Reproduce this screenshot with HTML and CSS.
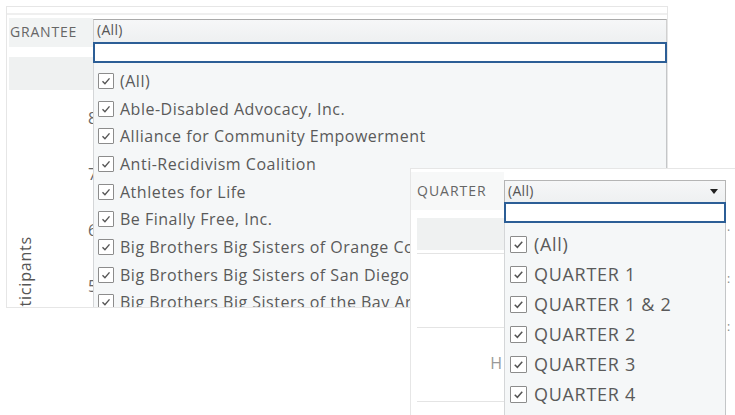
FILE: index.html
```html
<!DOCTYPE html>
<html lang="en">
<head>
    <meta charset="UTF-8">
    <title>Grantee and Quarter filters</title>
    <link rel="stylesheet" href="styles.css">
</head>
<body>
    <div class="shot shot-grantee">
        <div class="shot-top"></div>
        <div class="filter">
            <div class="filter-label">GRANTEE</div>
            <div class="combo">
                <div class="combo-box">(All)</div>
                <div class="combo-menu">
                    <div class="combo-search"></div>
                    <ul class="combo-list">
                        <li><span class="cb"><svg viewBox="0 0 16 16"><path d="M4 8.2 L6.8 11 L12 5"/></svg></span>(All)</li>
                        <li><span class="cb"><svg viewBox="0 0 16 16"><path d="M4 8.2 L6.8 11 L12 5"/></svg></span>Able-Disabled Advocacy, Inc.</li>
                        <li><span class="cb"><svg viewBox="0 0 16 16"><path d="M4 8.2 L6.8 11 L12 5"/></svg></span>Alliance for Community Empowerment</li>
                        <li><span class="cb"><svg viewBox="0 0 16 16"><path d="M4 8.2 L6.8 11 L12 5"/></svg></span>Anti-Recidivism Coalition</li>
                        <li><span class="cb"><svg viewBox="0 0 16 16"><path d="M4 8.2 L6.8 11 L12 5"/></svg></span>Athletes for Life</li>
                        <li><span class="cb"><svg viewBox="0 0 16 16"><path d="M4 8.2 L6.8 11 L12 5"/></svg></span>Be Finally Free, Inc.</li>
                        <li><span class="cb"><svg viewBox="0 0 16 16"><path d="M4 8.2 L6.8 11 L12 5"/></svg></span>Big Brothers Big Sisters of Orange County</li>
                        <li><span class="cb"><svg viewBox="0 0 16 16"><path d="M4 8.2 L6.8 11 L12 5"/></svg></span>Big Brothers Big Sisters of San Diego County</li>
                        <li><span class="cb"><svg viewBox="0 0 16 16"><path d="M4 8.2 L6.8 11 L12 5"/></svg></span>Big Brothers Big Sisters of the Bay Area</li>
                    </ul>
                </div>
            </div>
        </div>
        <div class="chart-head"></div>
        <div class="chart-body">
            <div class="axis-title">Participants</div>
            <div class="axis-ticks">
                <span>8</span>
                <span>7</span>
                <span>6</span>
                <span>5</span>
            </div>
        </div>
    </div>

    <div class="shot shot-quarter">
        <div class="shot-top small"></div>
        <div class="filter tall">
            <div class="filter-label wide">QUARTER</div>
            <div class="combo narrow">
                <div class="combo-box">(All)<span class="arrow"></span></div>
                <div class="combo-menu">
                    <div class="combo-search"></div>
                    <ul class="combo-list big">
                        <li><span class="cb"><svg viewBox="0 0 16 16"><path d="M4 8.2 L6.8 11 L12 5"/></svg></span>(All)</li>
                        <li><span class="cb"><svg viewBox="0 0 16 16"><path d="M4 8.2 L6.8 11 L12 5"/></svg></span>QUARTER 1</li>
                        <li><span class="cb"><svg viewBox="0 0 16 16"><path d="M4 8.2 L6.8 11 L12 5"/></svg></span>QUARTER 1 &amp; 2</li>
                        <li><span class="cb"><svg viewBox="0 0 16 16"><path d="M4 8.2 L6.8 11 L12 5"/></svg></span>QUARTER 2</li>
                        <li><span class="cb"><svg viewBox="0 0 16 16"><path d="M4 8.2 L6.8 11 L12 5"/></svg></span>QUARTER 3</li>
                        <li><span class="cb"><svg viewBox="0 0 16 16"><path d="M4 8.2 L6.8 11 L12 5"/></svg></span>QUARTER 4</li>
                    </ul>
                </div>
            </div>
            <div class="edge-marks">
                <span>·</span>
                <span>:</span>
                <span>:</span>
            </div>
        </div>
        <div class="chart-head wide"></div>
        <div class="rows">
            <div class="row"></div>
            <div class="row">H</div>
            <div class="row"></div>
        </div>
    </div>
</body>
</html>
```

FILE: styles.css
```css
body {
    margin: 0;
    background-color: #fff;
    font-family: "Open Sans", "Noto Sans", sans-serif;
    color: #555;
}
.shot {
    background-color: #fff;
    border: 1px solid #e6e6e6;
    overflow: hidden;
    box-sizing: border-box;
}
.shot-grantee {
    margin: 6px 0 0 6px;
    width: 662px;
    height: 302px;
}
.shot-quarter {
    position: absolute;
    left: 410px;
    top: 168px;
    width: 325px;
    height: 247px;
    border-right: none;
    border-bottom: none;
}
.shot-top {
    height: 6px;
    border-bottom: 2px solid #efefef;
    margin-bottom: 3px;
}
.shot-top.small {
    height: 3px;
    border-bottom: none;
    margin-bottom: 0;
}
.filter {
    display: flex;
    height: 29px;
    margin-left: 2px;
}
.filter.tall {
    height: 38px;
    margin-left: 0;
}
.filter-label {
    width: 84px;
    padding-left: 1px;
    box-sizing: border-box;
    background-color: #f1f3f3;
    font-size: 14px;
    letter-spacing: 0.8px;
    line-height: 28px;
    color: #666;
}
.filter-label.wide {
    width: 93px;
    padding-left: 6px;
    letter-spacing: 1px;
    line-height: 38px;
    background-color: #f7f8f8;
}
.combo {
    flex: 1;
    position: relative;
    margin-top: 1px;
}
.combo.narrow {
    flex: none;
    width: 222px;
    margin-top: 8px;
}
.combo-box {
    position: relative;
    height: 23px;
    box-sizing: border-box;
    border-top: 1px solid #a9a9a9;
    border-left: 1px solid #d0d0d0;
    border-right: 1px solid #d0d0d0;
    background: linear-gradient(#f6f7f8, #eef0f1);
    padding-left: 3px;
    font-size: 14px;
    letter-spacing: 0.3px;
    line-height: 20px;
    color: #555;
}
.narrow .combo-box {
    height: 22px;
    border-color: #b5b5b5;
}
.arrow {
    position: absolute;
    right: 7px;
    top: 8px;
    border-left: 4px solid transparent;
    border-right: 4px solid transparent;
    border-top: 5px solid #222;
}
.combo-menu {
    position: absolute;
    top: 23px;
    left: 0;
    right: 0;
    height: 300px;
    background-color: #f5f7f8;
    border-left: 1px solid #d4d6d8;
    border-right: 1px solid #c4c6c8;
}
.narrow .combo-menu {
    top: 22px;
}
.combo-search {
    height: 21px;
    box-sizing: border-box;
    margin: 0 -1px;
    border: 2px solid #2c5e96;
    background-color: #fff;
}
.combo-list {
    list-style: none;
    margin: 0;
    padding: 4px 0 0 4px;
    font-size: 16px;
    letter-spacing: 0.5px;
    color: #5a5a5a;
}
.combo-list li {
    display: flex;
    align-items: center;
    height: 27.7px;
    white-space: nowrap;
}
.combo-list.big {
    padding: 6px 0 0 5px;
    font-size: 18px;
    letter-spacing: 0.7px;
}
.combo-list.big li {
    height: 30px;
}
.cb {
    width: 16px;
    height: 16px;
    box-sizing: border-box;
    border: 1px solid #8c8c8c;
    border-radius: 1px;
    background-color: #fff;
    margin-right: 6px;
    flex: none;
}
.big .cb {
    width: 17px;
    height: 17px;
    margin-right: 7px;
}
.cb svg {
    display: block;
    width: 100%;
    height: 100%;
    fill: none;
    stroke: #555;
    stroke-width: 1.6;
}
.edge-marks {
    display: flex;
    flex-direction: column;
    gap: 34px;
    padding: 52px 0 0 1px;
    font-size: 12px;
    line-height: 14px;
    color: #888;
}
.chart-head {
    width: 84px;
    height: 33px;
    margin: 10px 0 0 2px;
    background-color: #eff1f1;
}
.chart-head.wide {
    width: 87px;
    height: 32px;
    margin: 8px 0 0 6px;
}
.chart-body {
    display: flex;
    margin-left: 2px;
}
.axis-title {
    width: 32px;
    margin-top: 146px;
    writing-mode: vertical-rl;
    transform: rotate(180deg);
    font-size: 16px;
    letter-spacing: 0.8px;
    line-height: 32px;
    color: #555;
}
.axis-ticks {
    display: flex;
    flex-direction: column;
    gap: 36px;
    margin-left: 47px;
    padding-top: 18px;
    font-size: 16px;
    line-height: 20px;
    color: #666;
}
.rows {
    margin: 3px 0 0 6px;
    width: 87px;
}
.row {
    height: 73px;
    border-top: 1px solid #e4e4e4;
    text-align: right;
    padding-right: 2px;
    font-size: 16px;
    line-height: 70px;
    color: #999;
}
.row + .row + .row {
    height: 70px;
}
```
